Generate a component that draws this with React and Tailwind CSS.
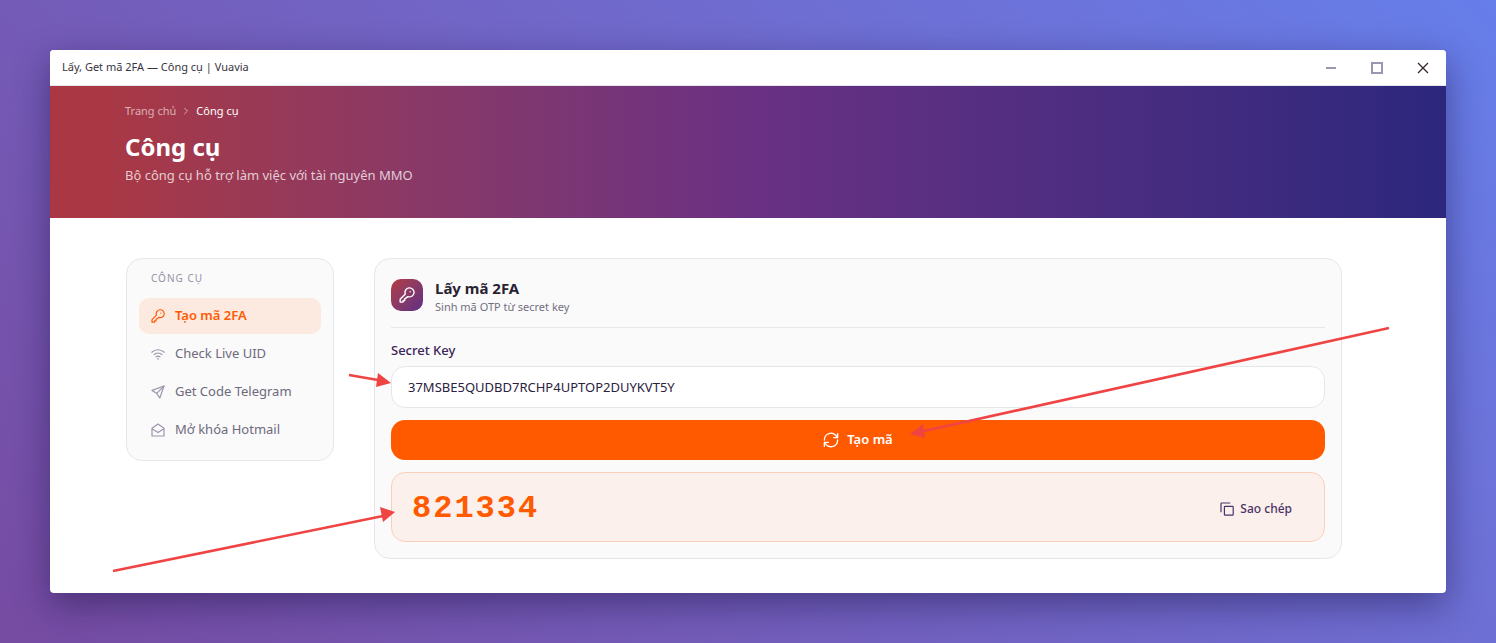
import { useState } from "react";
import { IoChevronForward } from "react-icons/io5";

function IconBase({ className, children }) {
  return (
    <svg
      className={className}
      viewBox="0 0 14 14"
      fill="none"
      stroke="currentColor"
      strokeWidth="1.2"
      strokeLinecap="round"
      strokeLinejoin="round"
      aria-hidden="true"
    >
      {children}
    </svg>
  );
}

function KeyIcon({ className }) {
  return (
    <IconBase className={className}>
      <path d="M5.5 6.1L1 10.7V13.2H3.6V11.8H5V10.4L7.8 8.4A3.96 3.96 0 1 0 5.5 6.1Z" />
      <circle cx="9.8" cy="4.2" r="0.6" fill="currentColor" stroke="none" />
    </IconBase>
  );
}

function WifiIcon({ className }) {
  return (
    <IconBase className={className}>
      <path d="M0.8 5.2C4.4 1.9 9.6 1.9 13.2 5.2" />
      <path d="M3 7.6C5.3 5.6 8.7 5.6 11 7.6" />
      <path d="M5.1 9.8C6.2 8.9 7.8 8.9 8.9 9.8" />
      <circle cx="7" cy="11.9" r="0.8" fill="currentColor" stroke="none" />
    </IconBase>
  );
}

function PlaneIcon({ className }) {
  return (
    <IconBase className={className}>
      <path d="M13 1L1 5.4L5.7 8.3L8.8 13Z" />
      <path d="M13 1L5.7 8.3" />
    </IconBase>
  );
}

function MailIcon({ className }) {
  return (
    <IconBase className={className}>
      <path d="M1 5.2L7 1L13 5.2V13H1Z" />
      <path d="M1.4 6L7 9.6L12.6 6" />
    </IconBase>
  );
}

function SyncIcon({ className }) {
  return (
    <IconBase className={className}>
      <path d="M1.2 7A5.8 5.8 0 0 1 12.4 4.8" />
      <path d="M12.8 1.4V4.9H9.4" />
      <path d="M12.8 7A5.8 5.8 0 0 1 1.6 9.2" />
      <path d="M1.2 12.6V9.1H4.6" />
    </IconBase>
  );
}

function CopyIcon({ className }) {
  return (
    <IconBase className={className}>
      <rect x="4.4" y="4.4" width="8.8" height="8.8" rx="0.8" />
      <path d="M1 9.8V1.8Q1 1 1.8 1H9.8" />
    </IconBase>
  );
}

const TOOLS = [
  { id: "2fa", label: "Tạo mã 2FA", Icon: KeyIcon },
  { id: "uid", label: "Check Live UID", Icon: WifiIcon },
  { id: "telegram", label: "Get Code Telegram", Icon: PlaneIcon },
  { id: "hotmail", label: "Mở khóa Hotmail", Icon: MailIcon },
];

function TitleBar() {
  return (
    <div className="flex h-9 items-center justify-between border-b border-gray-200 bg-white pl-3">
      <p className="text-[11px] text-[#3a3340]">
        Lấy, Get mã 2FA — Công cụ | Vuavia
      </p>
      <div className="flex">
        <button aria-label="Minimize" className="flex h-9 w-[46px] items-center justify-center">
          <svg width="12" height="12" viewBox="0 0 12 12">
            <path d="M1 6h10" stroke="#9c96b0" strokeWidth="2" />
          </svg>
        </button>
        <button aria-label="Maximize" className="flex h-9 w-[46px] items-center justify-center">
          <svg width="12" height="12" viewBox="0 0 12 12">
            <rect x="1" y="1" width="10" height="10" fill="none" stroke="#9c96b0" strokeWidth="2" />
          </svg>
        </button>
        <button aria-label="Close" className="flex h-9 w-[46px] items-center justify-center">
          <svg width="12" height="12" viewBox="0 0 12 12">
            <path d="M1 1l10 10M11 1L1 11" stroke="#33242f" strokeWidth="1.3" />
          </svg>
        </button>
      </div>
    </div>
  );
}

function Hero() {
  return (
    <header className="h-33 bg-linear-to-r from-[#a93844] from-4% via-[#6a3083] via-50% to-[#2c277d] px-[75px] pt-4">
      <nav className="flex h-[18px] items-center text-[11px]">
        <a href="#home" className="text-white/60">
          Trang chủ
        </a>
        <IoChevronForward className="mx-[5px] size-[10px] text-white/60" />
        <a href="#tools" className="text-white">
          Công cụ
        </a>
      </nav>
      <h1 className="mt-[11px] text-2xl font-bold text-white">Công cụ</h1>
      <p className="text-[13px] leading-6 text-white/75">
        Bộ công cụ hỗ trợ làm việc với tài nguyên MMO
      </p>
    </header>
  );
}

function Sidebar({ active, onSelect }) {
  return (
    <aside className="w-52 shrink-0 rounded-2xl border border-gray-200 bg-[#fafafa] p-3">
      <p className="px-3 pb-3 text-[10px] leading-[15px] tracking-widest text-[#9791a5]">
        CÔNG CỤ
      </p>
      <div className="flex flex-col gap-[2px]">
        {TOOLS.map(({ id, label, Icon }) => (
          <button
            key={id}
            onClick={() => onSelect(id)}
            className={`flex h-9 items-center gap-[10px] rounded-[10px] px-3 text-[13px] ${
              active === id
                ? "bg-[#fce9e0] font-semibold text-[#ff5a00]"
                : "text-[#6e697c]"
            }`}
          >
            <Icon
              className={`size-[14px] ${active === id ? "" : "text-[#9f94ad]"}`}
            />
            {label}
          </button>
        ))}
      </div>
    </aside>
  );
}

function CodePanel() {
  const [secret, setSecret] = useState("37MSBE5QUDBD7RCHP4UPTOP2DUYKVT5Y");
  const [code] = useState("821334");

  return (
    <section className="flex-1 rounded-2xl border border-gray-200 bg-[#fafafa] p-4">
      <div className="flex gap-3 border-b border-gray-200 pt-1 pb-[10px]">
        <div className="flex size-8 items-center justify-center rounded-[10px] bg-linear-to-br from-[#b53a3f] to-[#5f2c83] text-white">
          <KeyIcon className="size-4" />
        </div>
        <div>
          <h2 className="text-[15px] leading-[18px] font-bold text-[#292233]">
            Lấy mã 2FA
          </h2>
          <p className="text-[11px] leading-5 text-[#746e82]">
            Sinh mã OTP từ secret key
          </p>
        </div>
      </div>

      <label
        htmlFor="secret"
        className="mt-3 block text-[13px] leading-5 font-medium text-[#3b2458]"
      >
        Secret Key
      </label>
      <input
        id="secret"
        type="text"
        value={secret}
        onChange={(e) => setSecret(e.target.value)}
        className="mt-[6px] h-[42px] w-full rounded-[14px] border border-gray-200 bg-white px-4 text-[13px] text-[#2d2140] outline-none"
      />

      <button className="mt-3 flex h-10 w-full items-center justify-center gap-2 rounded-[14px] bg-[#ff5a00] text-[13px] font-semibold text-white">
        <SyncIcon className="size-4" />
        Tạo mã
      </button>

      <div className="mt-3 flex h-[70px] items-center justify-between rounded-[14px] border border-[#fbd0bb] bg-[#fbf0eb] pt-1 pr-8 pl-5">
        <output
          htmlFor="secret"
          className="font-['Liberation_Mono',monospace] text-[32px] font-bold tracking-[2px] text-[#ff5a00]"
        >
          {code}
        </output>
        <button className="flex items-center gap-[6px] text-xs font-medium text-[#4a3268]">
          <CopyIcon className="size-[14px]" />
          Sao chép
        </button>
      </div>
    </section>
  );
}

// Red pointer arrows laid over the window
function Arrows() {
  return (
    <svg
      className="pointer-events-none absolute top-0 left-0"
      width="1496"
      height="643"
      viewBox="0 0 1496 643"
      fill="#f04444"
      stroke="#f04444"
      aria-hidden="true"
    >
      <path d="M349 375L378 380" strokeWidth="2.6" />
      <path d="M391 383L378 373L376 387Z" stroke="none" />
      <path d="M113 571L383 516" strokeWidth="2.6" />
      <path d="M395 512L380 507L383 522Z" stroke="none" />
      <path d="M1389 328L924 431" strokeWidth="2.6" />
      <path d="M910 434L923 424L925 438Z" stroke="none" />
    </svg>
  );
}

export default function App() {
  const [active, setActive] = useState("2fa");

  return (
    <div className="relative min-h-screen overflow-hidden bg-linear-45 from-[#764ba2] to-[#667eea] p-[50px] font-['Noto_Sans',sans-serif]">
      <div className="overflow-hidden rounded-[4px] bg-white shadow-[0_12px_36px_rgba(20,10,60,0.45)]">
        <TitleBar />
        <Hero />
        <main className="flex items-start gap-10 pt-10 pr-26 pb-[34px] pl-19">
          <Sidebar active={active} onSelect={setActive} />
          <CodePanel />
        </main>
      </div>
      <Arrows />
    </div>
  );
}
